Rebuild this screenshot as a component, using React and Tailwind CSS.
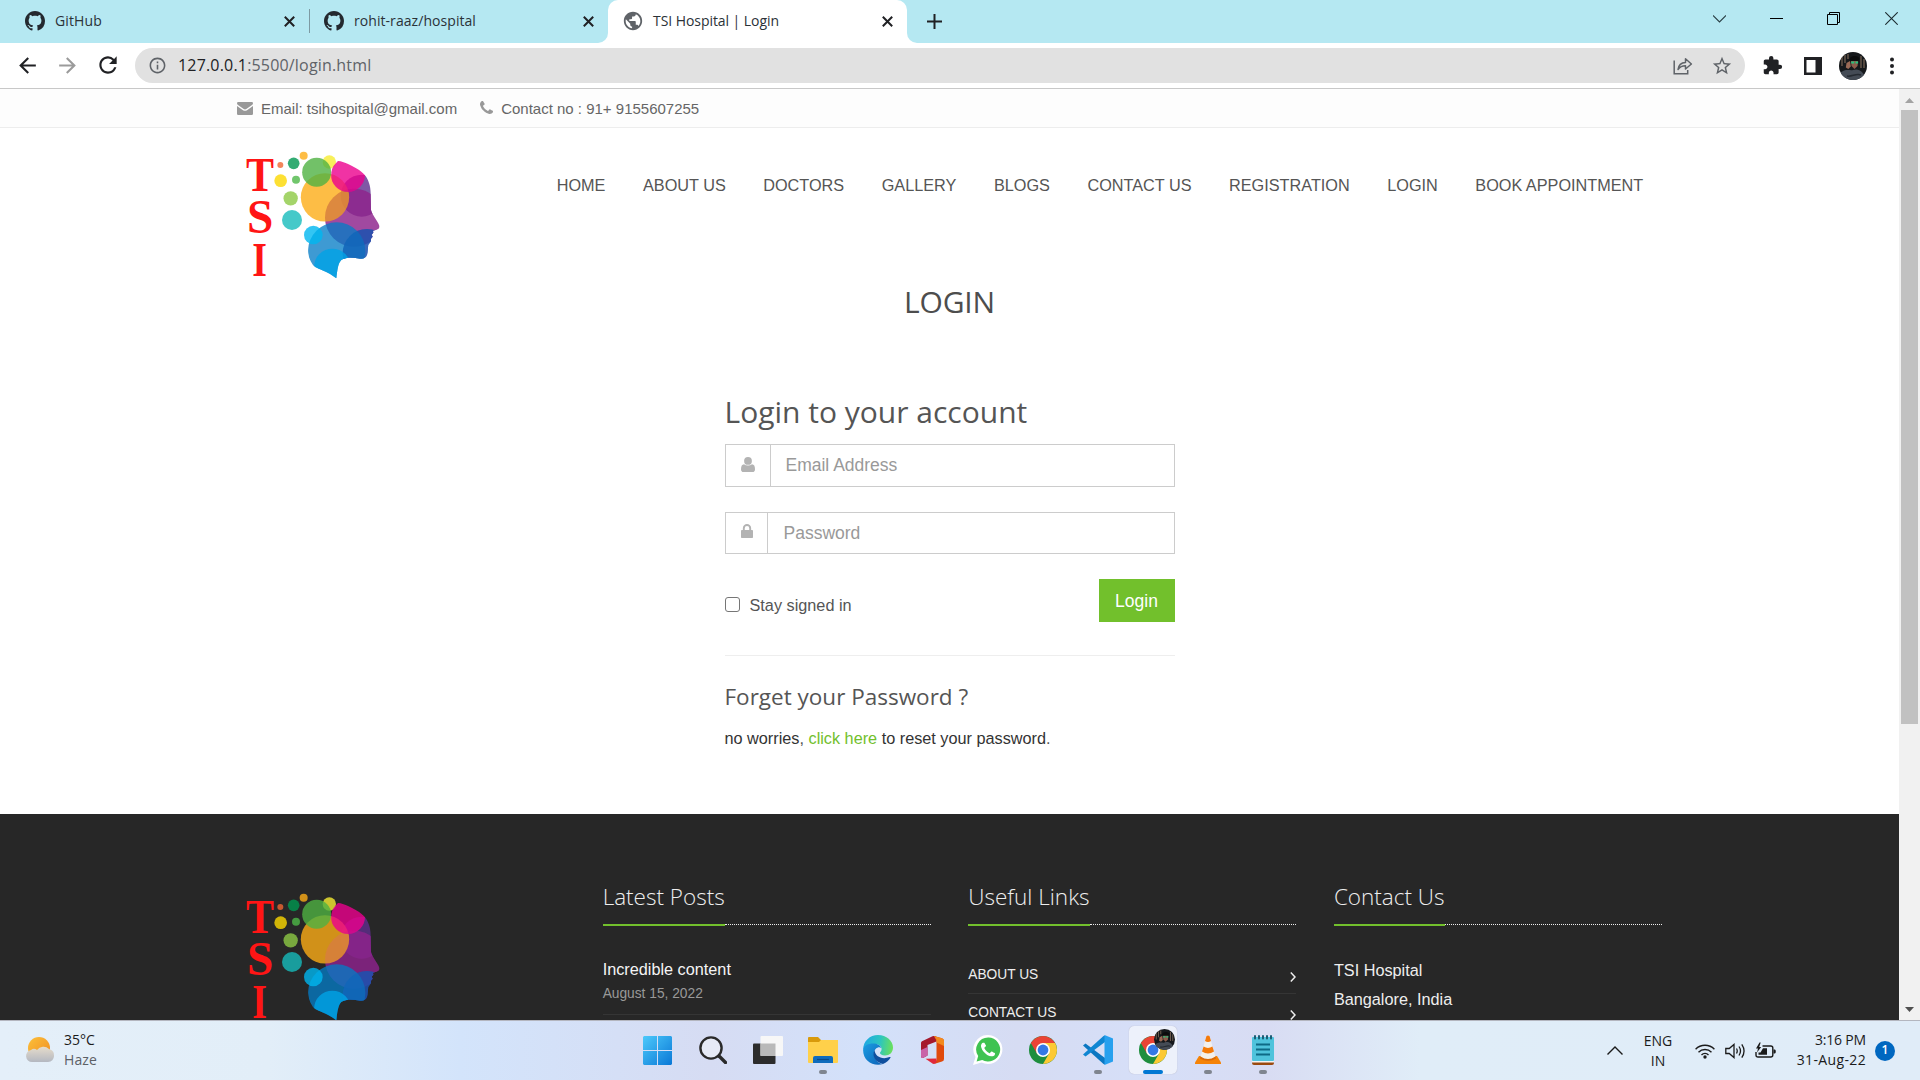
import React from "react";
import {
  MdArrowBack,
  MdArrowForward,
  MdRefresh,
  MdInfoOutline,
  MdExtension,
  MdStarBorder,
  MdPublic,
} from "react-icons/md";

const PHONE =
  "M1408 1240q0 27-10 70.5t-21 68.5q-21 50-122 106-94 51-186 51-27 0-53-3.5t-57.5-12.5-47-14.5-55.5-20.5-49-18q-98-35-175-83-127-79-264-216t-216-264q-48-77-83-175-3-9-18-49t-20.5-55.5-14.5-47-12.5-57.5-3.5-53q0-92 51-186 56-101 106-122 25-11 68.5-21t70.5-10q14 0 21 3 18 6 53 76 11 19 30 54t35 63.5 31 53.5q3 4 17.5 25t21.5 35.5 7 28.5q0 20-28.5 50t-62 55-62 53-28.5 46q0 9 5 22.5t8.5 20.5 14 24 11.5 19q76 137 174 235t235 174q2 1 19 11.5t24 14 20.5 8.5 22.5 5q18 0 46-28.5t53-62 55-62 50-28.5q14 0 28.5 7t35.5 21.5 25 17.5q25 15 53.5 31t63.5 35 54 30q70 35 76 53 3 7 3 21z";

function GithubMark() {
  return (
    <svg viewBox="0 0 16 16" className="size-5 shrink-0" fill="#24292f">
      <path d="M8 0C3.58 0 0 3.58 0 8c0 3.54 2.29 6.53 5.47 7.59.4.07.55-.17.55-.38 0-.19-.01-.82-.01-1.49-2.01.37-2.53-.49-2.69-.94-.09-.23-.48-.94-.82-1.13-.28-.15-.68-.52-.01-.53.63-.01 1.08.58 1.23.82.72 1.21 1.87.87 2.33.66.07-.52.28-.87.51-1.07-1.78-.2-3.64-.89-3.64-3.95 0-.87.31-1.59.82-2.15-.08-.2-.36-1.02.08-2.12 0 0 .67-.21 2.2.82.64-.18 1.32-.27 2-.27s1.36.09 2 .27c1.53-1.04 2.2-.82 2.2-.82.44 1.1.16 1.92.08 2.12.51.56.82 1.27.82 2.15 0 3.07-1.87 3.75-3.65 3.95.29.25.54.73.54 1.48 0 1.07-.01 1.93-.01 2.2 0 .21.15.46.55.38A8.01 8.01 0 0 0 16 8c0-4.42-3.58-8-8-8z" />
    </svg>
  );
}

function TabClose() {
  return (
    <svg viewBox="0 0 11 11" className="size-[11px] shrink-0" stroke="#202124" strokeWidth="2">
      <path d="M.8.8l9.400 9.400M10.200.8L.8 10.200" />
    </svg>
  );
}

function TabStrip() {
  return (
    <div className="flex h-[43px] w-full text-[14px] text-[#2b3238]">
      <div className="flex w-[608px] items-center rounded-br-[10px] bg-[#b5e8f2] pb-[1px]">
        <div className="flex w-[309px] items-center pr-[14px] pl-[25px]">
          <GithubMark />
          <span className="mb-[2px] ml-[10px] grow tracking-[0.13px]">GitHub</span>
          <TabClose />
        </div>
        <div className="h-6 w-px bg-[#7d9aa3]" />
        <div className="flex grow items-center pr-[14px] pl-[14px]">
          <GithubMark />
          <span className="mb-[2px] ml-[10px] grow tracking-[0.06px]">rohit-raaz/hospital</span>
          <TabClose />
        </div>
      </div>
      <div className="w-[299px] bg-[#b5e8f2]">
        <div className="flex h-[43px] items-center rounded-t-[10px] bg-white pr-[14px] pb-[1px] pl-[14px]">
          <MdPublic className="size-[22px] shrink-0 text-[#5f6368]" />
          <span className="mb-[2px] ml-[9px] grow tracking-[-0.06px]">TSI Hospital | Login</span>
          <TabClose />
        </div>
      </div>
      <div className="flex grow items-center rounded-bl-[10px] bg-[#b5e8f2]">
        <svg viewBox="0 0 15 15" className="ml-[20px] size-[15px]" stroke="#202124" strokeWidth="2">
          <path d="M7.500 0v15M0 7.500h15" />
        </svg>
        <div className="mr-[22px] mb-[6px] ml-auto flex items-center gap-[44px]">
          <svg viewBox="0 0 13 13" className="mr-[1px] size-[13px]" fill="none" stroke="#2b4046" strokeWidth="1.1">
            <path d="M0 3.500l6.500 6.500L13 3.500" />
          </svg>
          <svg viewBox="0 0 13 13" className="mr-[1px] -ml-[1px] size-[13px]" stroke="#000" strokeWidth="1">
            <path d="M0 6.500h13" />
          </svg>
          <svg viewBox="0 0 13 13" className="mr-[1px] -ml-[1px] size-[13px]" fill="none" stroke="#000" strokeWidth="1">
            <path d="M.5 2.500h10v10H.5zM2.500 2V.5h10v10H11" />
          </svg>
          <svg viewBox="0 0 13 13" className="size-[13px]" stroke="#1c2b30" strokeWidth="1.1">
            <path d="M.3.3l12.400 12.400M12.700.3L.3 12.700" />
          </svg>
        </div>
      </div>
    </div>
  );
}

function Avatar({ className }) {
  return (
    <svg viewBox="0 0 28 28" className={className}>
      <defs>
        <clipPath id="avatarClip">
          <circle cx="14" cy="14" r="14" />
        </clipPath>
      </defs>
      <g clipPath="url(#avatarClip)">
        <rect width="28" height="28" fill="#15181b" />
        <path d="M3 5v9M6 3v8M9 2v5M22 4v12M25 7v9" stroke="#6b5a4c" strokeWidth="1.4" />
        <path d="M12 9c1-3 6-3 7 0l-.5 5-3 3-3-3z" fill="#8d5c4b" />
        <path d="M10.500 8c0-4.500 9-5.500 10-1l-1 2h-8z" fill="#0b0c0d" />
        <path d="M7.500 11l3.500-2 .8 5.500-2.500 2.500-2.500-1.500z" fill="#9a6a56" />
        <path d="M12.200 10.500h3M16.500 10.500h2.600" stroke="#27c27c" strokeWidth="1.800" />
        <path d="M1 21c6-5 10-2 13-3 6-2 11 2 12 8l-8 3H5z" fill="#444b55" />
        <path d="M8 24c5 1 9-3 14-1" stroke="#252a31" strokeWidth="1.500" fill="none" />
      </g>
    </svg>
  );
}

function Toolbar() {
  return (
    <div className="flex h-[46px] w-full items-center border-b border-[#c8c8c8] bg-white">
      <MdArrowBack className="ml-[15px] size-[25px] text-[#202124]" />
      <MdArrowForward className="ml-[15px] size-[25px] text-[#9b9b9b]" />
      <MdRefresh className="mb-[1px] ml-[15px] size-[26px] text-[#202124]" />
      <div className="ml-[14px] flex h-[35px] w-[1610px] items-center rounded-full bg-[#e1e1e1] pr-[12px] pl-[13px]">
        <MdInfoOutline className="size-[19px] text-[#5f6368]" />
        <span className="mb-[1px] ml-[11px] text-[16px] tracking-[0.18px] text-[#5f6368]">
          <span className="text-[#202124]">127.0.0.1</span>:5500/login.html
        </span>
        <svg viewBox="0 0 20 18" className="ml-auto h-[18px] w-[20px]" fill="none" stroke="#5f6368" strokeWidth="1.5">
          <path d="M1.200 3.500v13.300h13.500V13" />
          <path d="M5 12.500c.6-4.500 3.500-6.800 7.500-7V1.800L18.400 7l-5.900 5V8.800c-3.200 0-5.600 1-7.500 3.700z" strokeLinejoin="round" />
        </svg>
        <MdStarBorder className="ml-[18px] size-[22px] text-[#5f6368]" />
      </div>
      <MdExtension className="ml-[17px] size-[21px] text-[#202124]" />
      <svg viewBox="0 0 18 18" className="ml-[21px] size-[18px]">
        <path d="M0 0h18v18H0zM2.500 3v12.500h9V3z" fill="#202124" fillRule="evenodd" />
      </svg>
      <Avatar className="ml-[17px] size-[28px]" />
      <svg viewBox="0 0 4 18" className="ml-[23px] h-[18px] w-[4px]" fill="#202124">
        <circle cx="2" cy="2.500" r="2" />
        <circle cx="2" cy="9" r="2" />
        <circle cx="2" cy="15.500" r="2" />
      </svg>
    </div>
  );
}

function HospitalLogo({ id }) {
  return (
    <svg viewBox="0 0 600 510" className="-mb-[20px] -ml-[17px] h-[170px] w-[200px] shrink-0">
      <defs>
        <clipPath id={id}>
          <path d="M335 94C348 90 362 93 375 98C400 108 423 121 435 136C446 150 452 170 452 190L453 240C456 254 471 270 478 287C479 293 477 297 470 299L459 302L460 308L455 314L458 320L453 326L453 334L445 345C443 355 445 365 441 375C437 384 430 388 420 386C400 383 378 381 364 390C354 400 352 420 349 445C338 436 325 428 305 420C292 414 283 412 277 402C268 388 264 376 264 358L255 300L300 240L315 180L333 150Z" />
        </clipPath>
      </defs>
      <g fill="#ff1515" fontFamily="'Liberation Serif', serif" fontWeight="700" fontSize="146">
        <text x="78" y="182" textLength="84" lengthAdjust="spacingAndGlyphs">T</text>
        <text x="81" y="309" textLength="79" lengthAdjust="spacingAndGlyphs">S</text>
        <text x="97" y="437" textLength="44" lengthAdjust="spacingAndGlyphs">I</text>
      </g>
      <g fillOpacity="0.8">
        <circle cx="251" cy="77" r="12" fill="#fcac16" />
        <circle cx="181" cy="105" r="9" fill="#ef6732" />
        <circle cx="221" cy="100" r="17.500" fill="#009750" />
        <circle cx="182" cy="152" r="19" fill="#fcd800" />
        <circle cx="228" cy="149" r="12" fill="#4db847" />
        <circle cx="212" cy="205" r="21.500" fill="#8dc945" />
        <circle cx="216" cy="270" r="30" fill="#16bbbb" />
        <circle cx="328" cy="96" r="20" fill="#f6ec32" />
        <g clipPath={`url(#${id})`}>
          <circle cx="425" cy="197" r="63" fill="#602e8e" />
          <circle cx="402" cy="263" r="87" fill="#8e248c" />
        </g>
        <circle cx="315" cy="202" r="72.500" fill="#fcac16" />
        <circle cx="290" cy="127" r="43.500" fill="#4fb142" />
        <g clipPath={`url(#${id})`}>
          <circle cx="384" cy="135" r="51" fill="#ec008d" />
          <circle cx="402" cy="263" r="87" fill="#8e248c" fillOpacity="0.14" />
          <circle cx="441" cy="370" r="73" fill="#1e4fb0" />
          <circle cx="350" cy="363" r="86" fill="#047cc6" fillOpacity="0.77" />
          <circle cx="441" cy="370" r="73" fill="#1e55ae" fillOpacity="0.35" />
          <circle cx="337" cy="411" r="55" fill="#00a2e6" />
        </g>
        <circle cx="280" cy="315" r="28" fill="#00b7f0" />
      </g>
    </svg>
  );
}

const NAV = ["HOME", "ABOUT US", "DOCTORS", "GALLERY", "BLOGS", "CONTACT US", "REGISTRATION", "LOGIN", "BOOK APPOINTMENT"];

function ContactBar() {
  return (
    <div className="h-[39px] border-b border-[#ededed] bg-[#fdfdfd]">
      <div className="mx-auto flex h-[38px] w-[1462.5px] items-center px-[18.75px] pt-[2px] text-[15px] text-[#666]">
        <svg viewBox="0 0 16 13" className="mb-[1px] h-[13px] w-4" fill="#999">
          <path d="M0 1.200Q0 0 1.200 0h13.600Q16 0 16 1.200q0 1-1 1.700L9.300 7Q8 7.900 6.700 7L1 2.900Q0 2.200 0 1.200zM0 4l6 4.200q2 1.300 4 0L16 4v7.700q0 1.300-1.300 1.300H1.300Q0 13 0 11.700z" />
        </svg>
        <span className="ml-[8px]">Email: tsihospital@gmail.com</span>
        <svg viewBox="0 128 1408 1408" className="mb-[4px] ml-[23px] size-[13px]" fill="#999">
          <path d={PHONE} />
        </svg>
        <span className="ml-[8px]">Contact no : 91+ 9155607255</span>
      </div>
    </div>
  );
}

function SiteHeader() {
  return (
    <header className="mx-auto flex h-[152px] w-[1462.5px] justify-between px-[18.75px] pt-[2px]">
      <HospitalLogo id="headTop" />
      <nav className="mt-[45px] mr-[18.75px] flex h-5 gap-[37.5px] text-[16.25px] leading-5 text-[#555]">
        {NAV.map((n) => (
          <a key={n} className="whitespace-nowrap">{n}</a>
        ))}
      </nav>
    </header>
  );
}

function LoginForm() {
  return (
    <section className="mx-auto mt-[70px] w-[450px]">
      <h2 className="font-['Open_Sans',sans-serif] text-[30px] leading-10 text-[#555]">Login to your account</h2>
      <div className="mt-[12px] flex h-[43px] border border-[#ccc]">
        <div className="flex w-[44px] items-center justify-center">
          <svg viewBox="0 0 14 15" className="mt-[-2px] h-[15px] w-[14px]" fill="#b3b3b3">
            <circle cx="7" cy="3.900" r="3.900" />
            <path d="M3 7.200Q4.600 8.600 7 8.600T11 7.200Q14 7.400 14 12.200 14 15 11.500 15h-9Q0 15 0 12.200 0 7.400 3 7.200z" />
          </svg>
        </div>
        <input placeholder="Email Address" className="grow border-l border-[#ccc] pb-[1px] pl-[15px] text-[17.5px] outline-none placeholder:text-[#999]" />
      </div>
      <div className="mt-[25px] flex h-[42px] border border-[#ccc]">
        <div className="flex w-[41px] items-center justify-center">
          <svg viewBox="0 0 12 14" className="mt-[-4px] ml-[1px] h-[14px] w-[12px]">
            <path d="M2.800 6.500V4.200a3.200 3.200 0 0 1 6.400 0v2.300" fill="none" stroke="#b3b3b3" strokeWidth="1.900" />
            <rect y="6" width="12" height="8" rx="0.800" fill="#b3b3b3" />
          </svg>
        </div>
        <input placeholder="Password" className="grow border-l border-[#ccc] pl-[16px] text-[17.5px] outline-none placeholder:text-[#999]" />
      </div>
      <div className="mt-[25px] flex h-[43px] justify-between">
        <label className="mt-[16px] flex h-5 text-[16.25px] leading-5 text-[#555]">
          <span className="mt-[2px] mr-[10px] size-[15px] rounded-[3px] border-[1.5px] border-[#767676] bg-white" />
          Stay signed in
        </label>
        <button className="h-[43px] w-[76px] bg-[#72c02c] pt-[1px] text-[17.5px] text-white">Login</button>
      </div>
      <hr className="mt-[33px] border-[#eee]" />
      <h4 className="mt-[26px] font-['Open_Sans',sans-serif] text-[22.5px] leading-[30px] text-[#555]">Forget your Password ?</h4>
      <p className="mt-[16px] text-[16.25px] leading-5 whitespace-nowrap text-[#333]">
        no worries<span className="text-[#555]">,</span> <a className="text-[#72c02c]">click here</a> to reset your password<span className="text-[#555]">.</span>
      </p>
    </section>
  );
}

function FooterHeading({ children }) {
  return (
    <div className="flex h-[45px] items-end">
      <h3 className="border-b-2 border-[#72c02c] pb-[12px] font-['Open_Sans',sans-serif] text-[22.5px] leading-[30px] font-light whitespace-nowrap text-[#eee]">
        {children}
      </h3>
      <div className="h-[2px] grow border-t border-dotted border-[#eee]" />
    </div>
  );
}

function ChevronItem({ children, first }) {
  return (
    <div className={first ? "flex h-[29px] items-start justify-between border-b border-[#353535]" : "flex h-[38px] items-start justify-between border-b border-[#353535] pt-[9px]"}>
      <span>{children}</span>
      <svg viewBox="0 0 6 10" className="mt-[7px] h-[10px] w-[6px]" fill="none" stroke="#eee" strokeWidth="1.500">
        <path d="M.8.6L5 5 .8 9.400" />
      </svg>
    </div>
  );
}

function SiteFooter() {
  return (
    <footer className="mt-[66px] h-[206px] bg-[#272727]">
      <div className="mx-auto grid w-[1462.5px] grid-cols-4">
        <div className="px-[18.75px] pt-[58px]">
          <HospitalLogo id="headBottom" />
        </div>
        <div className="px-[18.75px] pt-[67px]">
          <FooterHeading>Latest Posts</FooterHeading>
          <p className="mt-[33px] text-[16.25px] leading-5 text-[#f5f5f5]">Incredible content</p>
          <p className="mt-[5px] border-b border-[#353535] pb-[10px] text-[13.75px] leading-5 text-[#999]">August 15, 2022</p>
        </div>
        <div className="px-[18.75px] pt-[67px]">
          <FooterHeading>Useful Links</FooterHeading>
          <div className="mt-[39px] text-[13.75px] leading-5 text-[#eee]">
            <ChevronItem first>ABOUT US</ChevronItem>
            <ChevronItem>CONTACT US</ChevronItem>
          </div>
        </div>
        <div className="px-[18.75px] pt-[67px]">
          <FooterHeading>Contact Us</FooterHeading>
          <div className="mt-[34px] text-[16.25px] leading-5 text-[#eee]">
            <p>TSI Hospital</p>
            <p className="mt-[9px]">Bangalore, India</p>
          </div>
        </div>
      </div>
    </footer>
  );
}

function Scrollbar() {
  return (
    <div className="flex w-[21px] flex-col items-center bg-[#f1f1f1]">
      <svg viewBox="0 0 9 5" className="mt-[9px] h-[5px] w-[9px]" fill="#a3a3a3">
        <path d="M0 5L4.500 0 9 5z" />
      </svg>
      <div className="mt-[7px] h-[614px] w-[17px] bg-[#c1c1c1]" />
      <svg viewBox="0 0 9 5" className="mt-auto mb-[8px] h-[5px] w-[9px]" fill="#505050">
        <path d="M0 0h9L4.500 5z" />
      </svg>
    </div>
  );
}

function ChromeIcon({ className }) {
  return (
    <svg viewBox="-14 -14 28 28" className={className}>
      <circle r="14" fill="#1e8e3e" />
      <path d="M-12.120 -7A14 14 0 0 1 12.120 -7L0 -7L-6.060 3.500Z" fill="#ea4335" />
      <path d="M12.120 -7A14 14 0 0 1 0 14L6.060 3.500L0 -7Z" fill="#fcc934" />
      <circle r="7" fill="#fff" />
      <circle r="5.400" fill="#3478e5" />
    </svg>
  );
}

function StartIcon() {
  return (
    <svg viewBox="0 0 29 29" className="size-[29px]">
      <defs>
        <linearGradient id="win" x1="0" y1="0" x2="1" y2="1" gradientUnits="objectBoundingBox">
          <stop offset="0" stopColor="#4cc9fb" />
          <stop offset="1" stopColor="#0a78d6" />
        </linearGradient>
      </defs>
      <path d="M1 0h13v14H0V1zM15 0h13l1 1v13H15zM0 15h14v14H1l-1-1zM15 15h14v13l-1 1H15z" fill="url(#win)" />
    </svg>
  );
}

function SearchIcon() {
  return (
    <svg viewBox="0 0 28 28" className="size-[28px]" fill="none" stroke="#2a2a2a">
      <circle cx="12" cy="12" r="10.600" strokeWidth="2.400" fill="#e6eaf6" />
      <path d="M20 20l6.500 6.500" strokeWidth="3.400" strokeLinecap="round" />
    </svg>
  );
}

function TaskViewIcon() {
  return (
    <svg viewBox="0 0 30 28" className="h-[28px] w-[30px]">
      <rect y="7.500" width="22.500" height="20.500" rx="1" fill="#2c2c2c" />
      <rect x="7.500" width="22.500" height="20" rx="1" fill="#f7f7f7" />
      <path d="M7.500 7.500h15V20h-15z" fill="#b9b9b9" />
    </svg>
  );
}

function FolderIcon() {
  return (
    <svg viewBox="0 0 30 28" className="h-[28px] w-[30px]">
      <path d="M0 2Q0 1 1 1h9l3 3h16q1 0 1 1v5H0z" fill="#d99a0b" />
      <path d="M0 6h11l2-2h17v22q0 1-1 1H1q-1 0-1-1z" fill="#ffd04a" />
      <path d="M5 27v-5q0-2 2-2h16q2 0 2 2v5z" fill="#0f6cbd" />
      <path d="M9 23.500h12" stroke="#0a4a88" strokeWidth="1.200" />
    </svg>
  );
}

function EdgeIcon() {
  return (
    <svg viewBox="0 0 30 30" className="size-[30px]">
      <defs>
        <linearGradient id="edgeTop" x1="0" y1="0.400" x2="1" y2="0.500">
          <stop offset="0" stopColor="#1ea7e4" />
          <stop offset="0.550" stopColor="#2cc5c0" />
          <stop offset="1" stopColor="#6be05a" />
        </linearGradient>
        <linearGradient id="edgeLow" x1="0" y1="0" x2="1" y2="1">
          <stop offset="0" stopColor="#1b9de2" />
          <stop offset="1" stopColor="#0d62b8" />
        </linearGradient>
      </defs>
      <path d="M15 0C23.500 0 30 6 30 12.500c0 5-3.500 8-8 8-3.500 0-5-1.300-5-2.400 0-1 1.600-1.600 1.600-4C18.600 11 15.500 9 11.500 9 6 9 1 12.500.2 15 0 6 7 0 15 0z" fill="url(#edgeTop)" />
      <path d="M.1 15C.5 10.500 5.500 8.500 10 8.500c4.500 0 7.500 1.800 8.300 4.500C16 11 11.500 13 11 18c-.4 5 4 10.500 9 11C10 32 0 25.500.1 15z" fill="url(#edgeLow)" />
      <path d="M11.500 15C8 22 14 28 20 28.900c3.500-1.400 6-3.500 7.600-6.500-.1-.6-.6-.5-1-.3C19 25 12 21.500 11.500 15z" fill="#0f4f9e" />
    </svg>
  );
}

function OfficeIcon() {
  return (
    <svg viewBox="0 0 23 28" className="h-[28px] w-[23px]">
      <path d="M0 7Q0 5.800 1 5.300L11.500.2Q12.500-.1 14 .3l1.500.7v4.500L6.500 9v10.500l-4 2.200Q0 22.500 0 20z" fill="#a5182b" />
      <path d="M0 14l6.500-3v8.500l-4 2.200Q0 22.500 0 20z" fill="#c963a8" />
      <path d="M13 0l8 2.300q2 .6 2 2.700v18q0 2-2 2.600L13 28l2.500-4V5z" fill="#e04a0c" />
      <path d="M13 0l8 2.300q2 .6 2 2.700v5l-7.500-3.500V4z" fill="#f28a1e" />
      <path d="M4.500 22.800l11-.3V26q-.8 2-3.300 2z" fill="#e0293b" />
    </svg>
  );
}

function WhatsAppIcon() {
  return (
    <svg viewBox="0 0 30 30" className="size-[30px]">
      <path d="M15.500 0A14.500 14.500 0 1 1 8.500 27.500L0 30l2.500-8A14.500 14.500 0 0 1 15.500 0z" fill="#fff" />
      <path d="M15.500 2.500A12 12 0 1 1 9.200 24.900L3.600 26.400l1.600-5.300A12 12 0 0 1 15.500 2.500z" fill="#3fc351" />
      <svg x="8" y="7.500" width="14" height="14" viewBox="0 128 1408 1408">
        <path d={PHONE} fill="#fff" />
      </svg>
    </svg>
  );
}

function CodeIcon() {
  return (
    <svg viewBox="0 0 30 30" className="size-[30px]">
      <path d="M0 10.500L2.500 8.500 22 23v6.500L20.500 29z" fill="#0b77c2" />
      <path d="M0 19.500L2.500 21.500 22 7V.5L20.500 1z" fill="#0f86d2" />
      <path d="M21.500 0L30 3.500v23L21.500 30z" fill="#27a0ee" />
    </svg>
  );
}

function VlcIcon() {
  return (
    <svg viewBox="0 0 26 30" className="h-[30px] w-[26px]">
      <path d="M4 21h18l4 6.500V29H0v-1.500z" fill="#f58307" />
      <path d="M11.500 1Q13 0 14.500 1L20.500 22q-7.500 5-15 0z" fill="#f3f0ec" />
      <path d="M11.500 1Q13 0 14.500 1L16 6q-3 1.800-6 0zM8.600 11.500q4.400 2.800 8.800 0l1.600 5q-6 4-12 0z" fill="#f47a0a" />
      <path d="M5.500 21.500q7.500 5 15 0l.6 2q-8.100 4.500-16.200 0z" fill="#d9690a" />
    </svg>
  );
}

function NotepadIcon() {
  return (
    <svg viewBox="0 0 22 30" className="h-[30px] w-[22px]">
      <path d="M0 25h22v3q0 2-2 2H2q-2 0-2-2z" fill="#9a4a10" />
      <path d="M0 25h22v2.500H0z" fill="#f3f3f3" />
      <rect y="2" width="22" height="24" rx="1" fill="#4fc3dc" />
      <path d="M4 9.500h14M4 14.500h14M4 19.500h14" stroke="#0e6a86" strokeWidth="1.800" />
      <path d="M3 1v2.500M7 1v2.500M11 1v2.500M15 1v2.500M19 1v2.500" stroke="#1b5d74" strokeWidth="2" strokeLinecap="round" />
    </svg>
  );
}

function HazeIcon() {
  return (
    <svg viewBox="0 0 30 28" className="mt-[15px] h-[28px] w-[30px]">
      <defs>
        <linearGradient id="sun" x1="0" y1="0" x2="1" y2="1">
          <stop offset="0" stopColor="#fcc03a" />
          <stop offset="1" stopColor="#ef8c22" />
        </linearGradient>
        <linearGradient id="cloud" x1="0" y1="0" x2="0" y2="1">
          <stop offset="0" stopColor="#e6dccb" />
          <stop offset="1" stopColor="#b4b8c1" />
        </linearGradient>
      </defs>
      <circle cx="14" cy="12" r="11" fill="url(#sun)" />
      <path d="M7 26a6 6 0 0 1-1-11.900 4.500 4.500 0 0 1 6 0A8 8 0 0 1 24 13a6.600 6.600 0 0 1-1 13z" fill="url(#cloud)" />
    </svg>
  );
}

const APPS = [
  { name: "start", icon: <StartIcon /> },
  { name: "search", icon: <SearchIcon /> },
  { name: "taskview", icon: <TaskViewIcon /> },
  { name: "files", icon: <FolderIcon />, open: true },
  { name: "edge", icon: <EdgeIcon /> },
  { name: "office", icon: <OfficeIcon /> },
  { name: "whatsapp", icon: <WhatsAppIcon /> },
  { name: "chrome", icon: <ChromeIcon className="size-[28px]" /> },
  { name: "code", icon: <CodeIcon />, open: true },
  { name: "chrome-profile", icon: <ChromeIcon className="size-[28px]" />, active: true },
  { name: "vlc", icon: <VlcIcon />, open: true },
  { name: "notepad", icon: <NotepadIcon />, open: true },
];

function Taskbar() {
  return (
    <div className="flex h-[60px] w-full border-t border-[#b4b6bf] bg-[linear-gradient(90deg,#e4eff9_0%,#e2eef8_14%,#d3e4fb_24%,#d6dcf3_37%,#d3e1fa_45%,#d6dcf3_53%,#d6dff8_60%,#d8dcf3_66%,#e0edf8_74%,#e0ecf8_100%)] text-[14px] text-[#1b1b1b]">
      <div className="flex w-[630px] pl-[25px]">
        <HazeIcon />
        <div className="ml-[9px] pt-[9px] leading-5">
          <div>35°C</div>
          <div className="tracking-[0.1px] text-[#5c6066]">Haze</div>
        </div>
      </div>
      {APPS.map((a) => (
        <div key={a.name} className="flex w-[55px] justify-center">
          <div className={a.active ? "relative mt-[5px] flex size-[48px] flex-col items-center rounded-[5px] bg-[#edf1fb] pt-[9px] shadow-[0_0_1px_#aab]" : "mt-[5px] flex size-[48px] flex-col items-center pt-[9px]"}>
            <div className="flex h-[30px] items-center">{a.icon}</div>
            {a.active && <Avatar className="absolute top-[3px] left-[25px] size-[21px]" />}
            {a.active && <div className="mt-[5px] h-[4px] w-[20px] rounded-full bg-[#0078d4]" />}
            {a.open && <div className="mt-[5px] h-[4px] w-[8px] rounded-full bg-[#7f858f]" />}
          </div>
        </div>
      ))}
      <div className="ml-auto flex items-center pr-[25px]">
        <svg viewBox="0 0 16 9" className="h-[9px] w-4" fill="none" stroke="#1b1b1b" strokeWidth="1.400">
          <path d="M.5 8.500L8 1l7.500 7.500" />
        </svg>
        <div className="ml-[20px] w-[30px] text-center text-[14px] leading-5">
          <div>ENG</div>
          <div>IN</div>
        </div>
        <svg viewBox="0 0 20 16" className="ml-[22px] h-4 w-5" fill="none" stroke="#1b1b1b" strokeWidth="1.400">
          <path d="M.6 6.200a13.300 13.300 0 0 1 18.800 0M3.500 9.200a9.200 9.200 0 0 1 13 0M6.500 12a5 5 0 0 1 7 0" />
          <circle cx="10" cy="14" r="1.700" fill="#1b1b1b" stroke="none" />
        </svg>
        <svg viewBox="0 0 21 16" className="ml-[10px] h-4 w-[21px]" fill="none" stroke="#1b1b1b" strokeWidth="1.300">
          <path d="M.8 5.500h3.400L9 1.500v13l-4.800-4H.8zM11.500 5.500q1.500 2.500 0 5M14 3.500q3 4.500 0 9M16.800 1.300q4.500 6.700 0 13.400" />
        </svg>
        <svg viewBox="0 0 21 16" className="ml-[9px] h-4 w-[21px] overflow-visible">
          <path d="M7.500 3h8.300q2 0 2 2v7q0 2-2 2H3q-2 0-2-2V9" fill="none" stroke="#1b1b1b" strokeWidth="1.400" />
          <path d="M18.500 6.500h1.300q1 0 1 2t-1 2h-1.300zM8 5.300h4v6.400H3.500V9.500h2z" fill="#1b1b1b" />
          <path d="M4.500-.5L1 5.500h2l-1 4 4.200-5.500H4.200l1.500-4.500z" fill="#1b1b1b" />
        </svg>
        <div className="mb-[2px] ml-[19px] w-[71px] text-right leading-5">
          <div className="tracking-[-0.18px]">3:16 PM</div>
          <div className="tracking-[0.35px]">31-Aug-22</div>
        </div>
        <div className="ml-[9px] flex size-[20px] items-center justify-center rounded-full bg-[#0067c0] pb-[1px] text-[12px] font-semibold text-white">1</div>
      </div>
    </div>
  );
}

export default function App() {
  return (
    <div className="flex h-[1080px] w-[1920px] flex-col overflow-hidden bg-white font-['Open_Sans',sans-serif]">
      <TabStrip />
      <Toolbar />
      <div className="flex h-[931px] w-full overflow-hidden">
        <div className="w-[1899px] overflow-hidden font-['Liberation_Sans',Arial,sans-serif]">
          <ContactBar />
          <SiteHeader />
          <h1 className="mt-[2px] text-center font-['Open_Sans',sans-serif] text-[30px] leading-10 tracking-[-0.2px] text-[#4d4d4d]">LOGIN</h1>
          <LoginForm />
          <SiteFooter />
        </div>
        <Scrollbar />
      </div>
      <Taskbar />
    </div>
  );
}
